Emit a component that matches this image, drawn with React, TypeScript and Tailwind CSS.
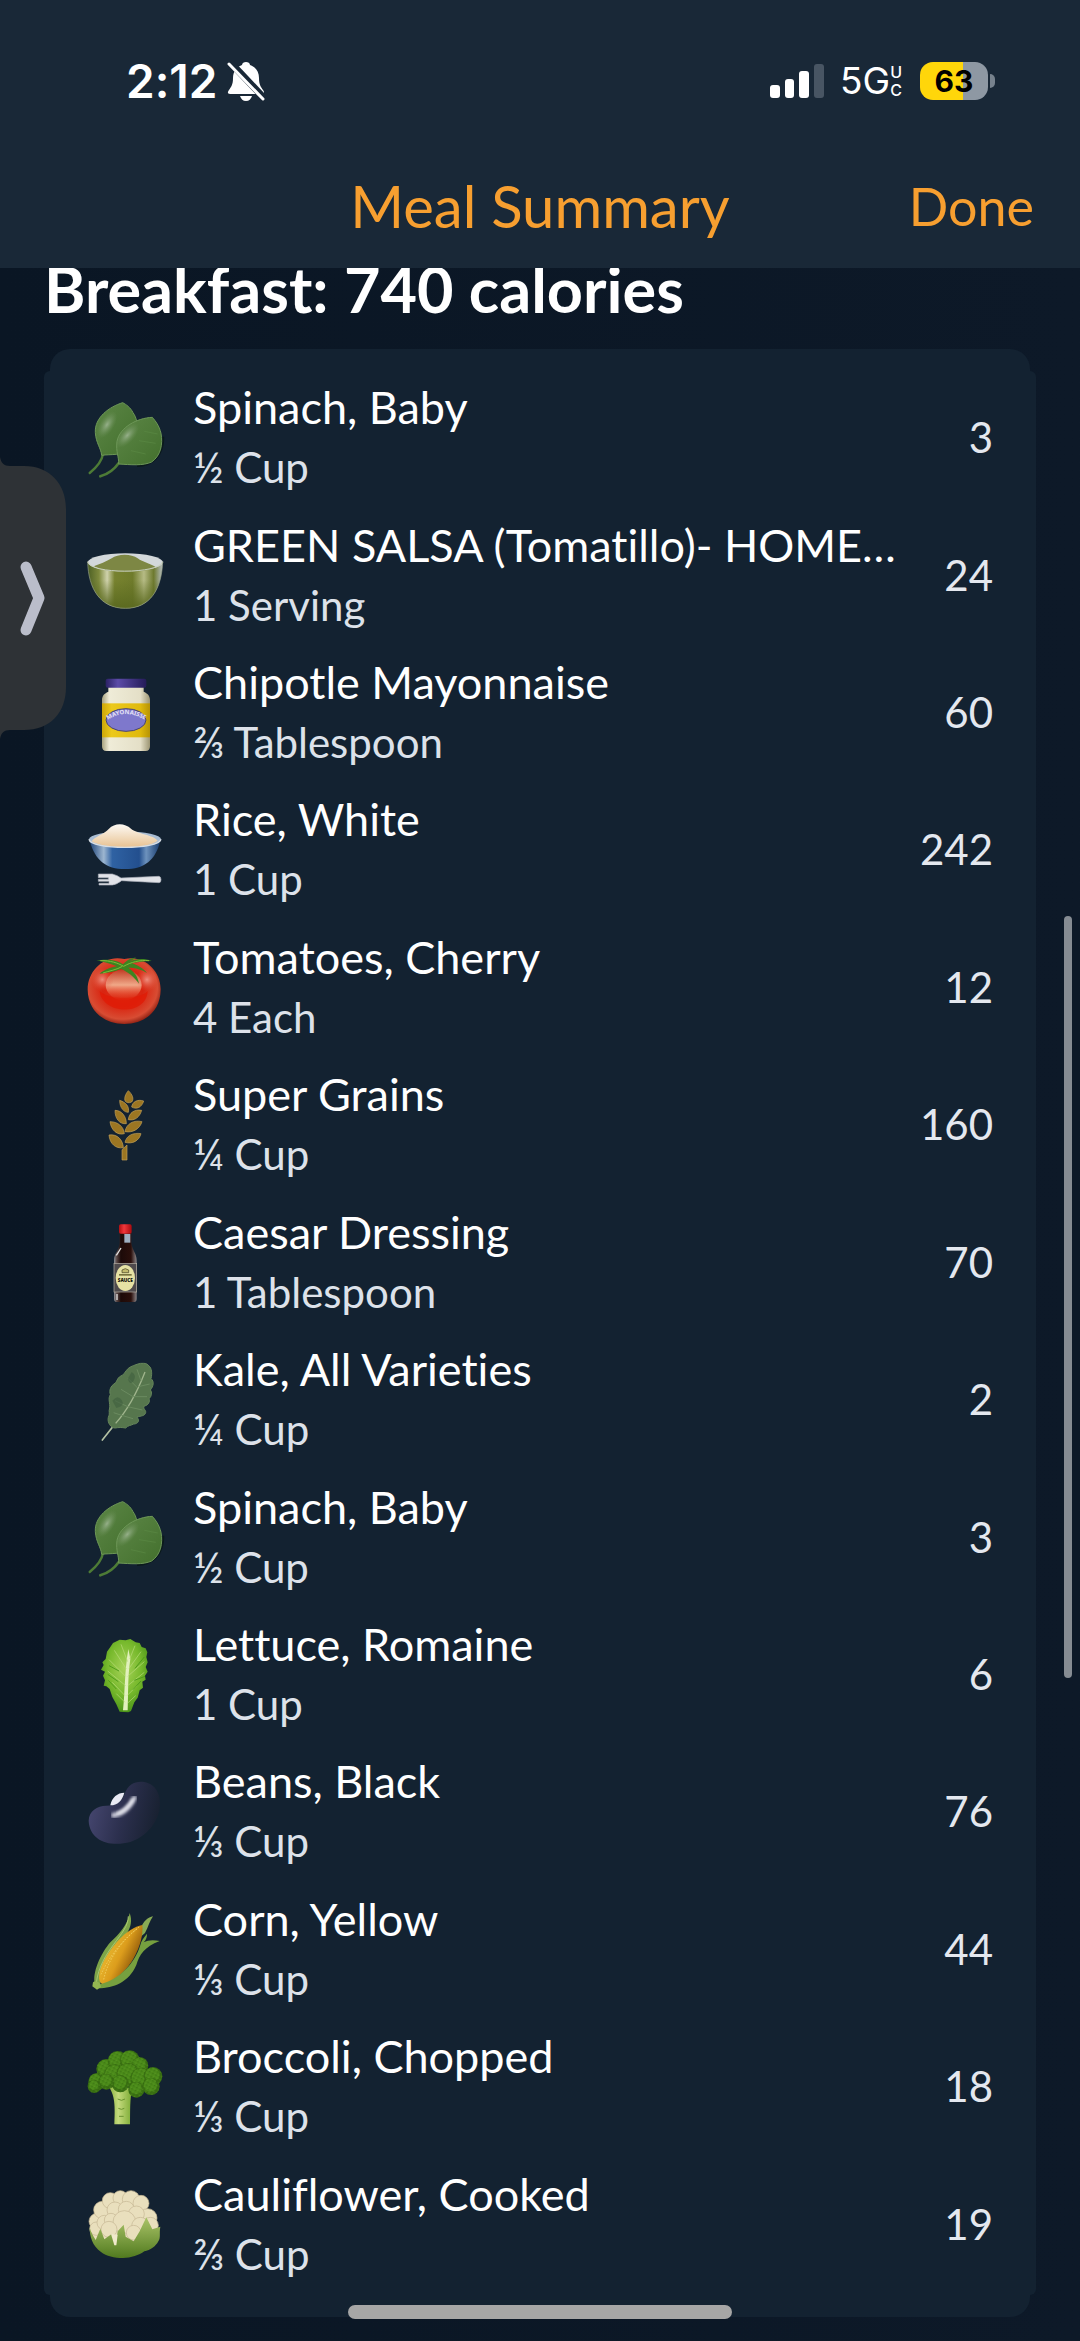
import type { ReactNode } from "react"

const Spinach = () => (
  <>
    <defs>
      <linearGradient id="leaf" x1="0" y1="0" x2="1" y2="1">
        <stop offset="0" stopColor="#5c8646" />
        <stop offset="1" stopColor="#43702d" />
      </linearGradient>
      <radialGradient id="leafShine">
        <stop offset="0" stopColor="#9db592" stopOpacity="0.9" />
        <stop offset="1" stopColor="#6f935c" stopOpacity="0" />
      </radialGradient>
    </defs>
    <path d="M48 156C44 182 24 200 8 213" fill="none" stroke="#4d7b36" strokeWidth="7" strokeLinecap="round" />
    <path d="M107 2C68 14 22 46 25 92C27 124 42 138 44 160C70 156 110 162 130 140C158 108 156 56 138 32C130 16 118 8 107 2Z" fill="url(#leaf)" stroke="#6d9757" strokeWidth="3" />
    <ellipse cx="60" cy="68" rx="22" ry="46" fill="url(#leafShine)" transform="rotate(32 60 68)" />
    <path d="M229 104C230 160 196 192 150 192" fill="none" stroke="#0b1a1c" strokeWidth="6" />
    <path d="M96 182C82 202 60 217 40 223" fill="none" stroke="#4d7b36" strokeWidth="8" strokeLinecap="round" />
    <path d="M196 46C150 48 98 76 90 118C86 150 96 164 95 186C130 188 168 192 194 180C222 160 228 126 222 94C216 70 206 58 196 46Z" fill="url(#leaf)" stroke="#6d9757" strokeWidth="3" />
    <path d="M132 146L176 156M156 116L206 124M172 88L212 96" fill="none" stroke="#5b8944" strokeWidth="2" />
    <ellipse cx="121" cy="100" rx="22" ry="46" fill="url(#leafShine)" transform="rotate(42 121 100)" />
  </>
)

const Salsa = () => (
  <>
    <defs>
      <linearGradient id="salsaBowl">
        <stop offset="0" stopColor="#4c5f24" />
        <stop offset="0.15" stopColor="#7e8a3d" />
        <stop offset="0.26" stopColor="#cfd2ac" />
        <stop offset="0.36" stopColor="#77822f" />
        <stop offset="0.6" stopColor="#6f7b2b" />
        <stop offset="0.75" stopColor="#b6bb85" />
        <stop offset="0.88" stopColor="#6d792e" />
        <stop offset="1" stopColor="#b9c0c4" />
      </linearGradient>
      <linearGradient id="salsaShade" x1="0" y1="0" x2="0" y2="1">
        <stop offset="0.4" stopColor="#5b6a20" stopOpacity="0" />
        <stop offset="1" stopColor="#5b6a20" />
      </linearGradient>
    </defs>
    <path d="M2 68C4 150 40 208 115 208C190 208 224 150 227 68Z" fill="url(#salsaBowl)" />
    <path d="M2 68C4 150 40 208 115 208C190 208 224 150 227 68Z" fill="url(#salsaShade)" />
    <ellipse cx="115" cy="70" rx="113" ry="27" fill="#d3d8da" />
    <path d="M20 82C38 76 58 68 74 58C92 44 134 44 152 58C168 70 190 74 206 84C170 104 60 104 20 82Z" fill="#7d8744" />
    <path d="M2 68C8 106 218 106 227 68" fill="none" stroke="#c9d1bd" strokeWidth="3" />
    <path d="M2 68C4 150 40 208 115 208C190 208 224 150 227 68" fill="none" stroke="#9aa48b" strokeWidth="2" />
  </>
)

const Mayonnaise = () => (
  <>
    <defs>
      <linearGradient id="jar">
        <stop offset="0" stopColor="#a7a27f" />
        <stop offset="0.15" stopColor="#efecd8" />
        <stop offset="0.8" stopColor="#e4dfc7" />
        <stop offset="1" stopColor="#9c9573" />
      </linearGradient>
      <linearGradient id="jarLabel">
        <stop offset="0" stopColor="#cda708" />
        <stop offset="0.2" stopColor="#ecc91c" />
        <stop offset="0.8" stopColor="#dfb90d" />
        <stop offset="1" stopColor="#b79304" />
      </linearGradient>
      <linearGradient id="lid">
        <stop offset="0" stopColor="#2b2164" />
        <stop offset="0.3" stopColor="#5c4ba8" />
        <stop offset="1" stopColor="#241b58" />
      </linearGradient>
      <path id="labelArc" d="M60 130Q116 92 176 130" />
    </defs>
    <path d="M64 28H170V44C184 50 189 58 189 70V208Q189 222 176 222H58Q45 222 45 208V70C45 58 50 50 64 44Z" fill="url(#jar)" />
    <rect x="56" y="5" width="122" height="27" rx="6" fill="url(#lid)" />
    <rect x="45" y="79" width="144" height="102" fill="url(#jarLabel)" />
    <ellipse cx="117" cy="129" rx="60" ry="34" fill="#7e78cc" stroke="#4a4470" strokeWidth="3" />
    <text fill="#e6e3f6" textAnchor="middle" className="font-sans text-[18px] font-bold">
      <textPath href="#labelArc" startOffset="50%">MAYONAISSE</textPath>
    </text>
  </>
)

const Rice = () => (
  <>
    <defs>
      <linearGradient id="blueBowl">
        <stop offset="0" stopColor="#1d4378" />
        <stop offset="0.2" stopColor="#9db6d0" />
        <stop offset="0.32" stopColor="#2f62a3" />
        <stop offset="0.7" stopColor="#234f8e" />
        <stop offset="0.8" stopColor="#6d92bd" />
        <stop offset="1" stopColor="#173b6d" />
      </linearGradient>
      <linearGradient id="grain" x1="0" y1="0" x2="0" y2="1">
        <stop offset="0" stopColor="#fdfaf4" />
        <stop offset="1" stopColor="#e8c292" />
      </linearGradient>
    </defs>
    <path d="M8 80C24 138 56 165 114 165C172 165 206 138 220 80Z" fill="url(#blueBowl)" />
    <ellipse cx="114" cy="76" rx="108" ry="24" fill="#a9bdd3" />
    <path d="M14 82C24 66 50 62 66 44C82 26 114 26 132 44C150 60 200 62 212 80C180 106 50 106 14 82Z" fill="url(#grain)" />
    <path d="M6 76C10 108 216 108 222 76" fill="none" stroke="#d8dde2" strokeWidth="4" />
    <path d="M34 180H76Q92 184 102 192L216 187Q222 188 222 197T216 206L104 200Q88 212 76 213H36V208H66V202H34V196H64V191H34V186Z" fill="#e1e3e8" stroke="#a6abb5" strokeWidth="2" />
  </>
)

const Tomato = () => (
  <>
    <defs>
      <radialGradient id="tomatoSkin" cx="0.48" cy="0.45" r="0.56">
        <stop offset="0" stopColor="#e0371c" />
        <stop offset="0.5" stopColor="#d92410" />
        <stop offset="0.85" stopColor="#d84c33" />
        <stop offset="1" stopColor="#8f2214" />
      </radialGradient>
      <linearGradient id="tomatoGlow" x1="0" y1="0" x2="0" y2="1">
        <stop offset="0" stopColor="#c23c24" />
        <stop offset="0.5" stopColor="#f0a888" />
        <stop offset="1" stopColor="#e23318" stopOpacity="0.1" />
      </linearGradient>
      <radialGradient id="tomatoSpot">
        <stop offset="0" stopColor="#f0998a" stopOpacity="0.9" />
        <stop offset="1" stopColor="#e0553c" stopOpacity="0" />
      </radialGradient>
    </defs>
    <path d="M112 24C170 10 222 58 221 116C220 182 172 219 112 219C52 219 3 180 2 116C2 56 54 10 112 24Z" fill="url(#tomatoSkin)" />
    <path d="M38 120C44 190 178 198 182 120C160 146 64 148 38 120Z" fill="#e01c06" opacity="0.8" />
    <ellipse cx="110" cy="102" rx="54" ry="46" fill="url(#tomatoGlow)" />
    <circle cx="46" cy="86" r="34" fill="url(#tomatoSpot)" />
    <circle cx="180" cy="86" r="34" fill="url(#tomatoSpot)" />
    <path d="M108 40C82 22 50 26 28 28C56 34 74 40 90 46C66 50 50 58 38 68C64 66 84 62 102 54C122 62 140 76 156 98C152 76 142 62 124 50C144 50 166 56 180 66C170 52 150 42 134 36C152 34 174 30 194 30C170 20 144 24 126 32L148 20C132 20 118 28 108 40Z" fill="#3d8420" />
    <path d="M40 29C70 28 92 36 110 46C130 34 160 26 186 29M106 46C90 56 66 60 48 66" fill="none" stroke="#7fbb3a" strokeWidth="3" />
  </>
)

const Grain = () => (
  <g fill="#9c7622" stroke="#c2a259" strokeWidth="2">
    <path d="M124 5C136 16 142 30 134 39C126 43 118 41 115 37C110 28 116 14 124 5Z" />
    <path d="M98 34C116 40 128 52 124 70C112 70 98 58 98 34Z" />
    <path d="M170 36C152 30 136 38 134 54C148 62 164 56 170 36Z" />
    <path d="M84 64C104 64 118 82 118 104C98 106 84 90 84 64Z" />
    <path d="M164 64C142 60 126 72 124 92C144 96 158 84 164 64Z" />
    <path d="M69 98C92 98 110 112 112 134C92 140 72 124 69 98Z" />
    <path d="M165 98C140 92 118 104 114 128C138 132 158 120 165 98Z" />
    <path d="M66 138C92 134 108 154 109 176C86 180 68 164 66 138Z" />
    <path d="M162 134C138 130 118 140 114 160C136 166 156 156 162 134Z" />
    <path d="M105 182L120 168V213H105Z" />
  </g>
)

const Bottle = () => (
  <>
    <defs>
      <linearGradient id="sauce">
        <stop offset="0" stopColor="#8e9298" />
        <stop offset="0.12" stopColor="#5a4846" />
        <stop offset="0.3" stopColor="#1c0a08" />
        <stop offset="0.75" stopColor="#2a0f0b" />
        <stop offset="1" stopColor="#8b8587" />
      </linearGradient>
      <linearGradient id="cap">
        <stop offset="0" stopColor="#b30f12" />
        <stop offset="0.4" stopColor="#f1383c" />
        <stop offset="1" stopColor="#a90b0f" />
      </linearGradient>
    </defs>
    <path d="M98 20H133V52C136 74 149 82 149 104V218Q149 228 140 228H90Q81 228 81 218V104C81 82 96 74 98 52Z" fill="url(#sauce)" />
    <path d="M112 24H130V50H112Z" fill="#9fb0c2" />
    <path d="M88 88Q96 76 102 66" stroke="#e3e3e3" strokeWidth="4" fill="none" />
    <rect x="96" y="-5" width="38" height="28" rx="5" fill="url(#cap)" />
    <rect x="81" y="112" width="68" height="86" fill="#4f4a4c" stroke="#b8b2a4" strokeWidth="2" />
    <ellipse cx="115" cy="156" rx="29" ry="39" fill="#e6e2a4" />
    <path d="M105 140V132Q115 124 125 132V140Z" fill="#c2ba6e" stroke="#443f23" strokeWidth="2" />
    <rect x="96" y="144" width="38" height="5" fill="#78733f" />
    <text x="115" y="168" textAnchor="middle" fill="#14120c" className="font-sans text-[14px] font-black">SAUCE</text>
    <path d="M90 204V222" stroke="#c5c1c1" strokeWidth="5" />
  </>
)

const Kale = () => (
  <>
    <path d="M46 228L98 162" stroke="#b3c1a4" strokeWidth="5" strokeLinecap="round" />
    <path
      d="M170 -2C158 -4 142 4 132 8C118 14 116 26 106 34C90 40 92 50 84 58C70 66 66 80 70 92C62 104 70 118 68 132C64 142 70 150 64 160C60 176 72 192 84 192C96 190 104 190 116 192C122 184 134 184 140 180C152 180 160 170 150 160C162 154 172 158 176 146C178 138 166 134 172 126C184 124 190 112 186 104C194 98 196 84 190 78C200 66 202 52 192 44C196 28 194 12 186 6C182 0 176 -2 170 -2Z"
      fill="#56764d"
      stroke="#66865b"
      strokeWidth="3"
    />
    <path d="M86 178C120 140 150 86 174 24" fill="none" stroke="#a0b58d" strokeWidth="4" />
    <path d="M104 154L80 146M122 128L84 110M138 98L102 76M152 72L122 42M162 50L150 16M104 154L138 164M122 128L166 138M138 98L180 98M154 68L188 60" fill="none" stroke="#6b8b60" strokeWidth="3" />
    <path d="M76 110Q92 90 104 108T88 132ZM134 24Q150 34 140 50T122 44Z" fill="#3f5f3f" opacity="0.6" />
  </>
)

const Lettuce = () => (
  <>
    <defs>
      <radialGradient id="romaine" cx="0.5" cy="0.4" r="0.6">
        <stop offset="0" stopColor="#a8d35a" />
        <stop offset="0.6" stopColor="#77b92c" />
        <stop offset="1" stopColor="#4c9519" />
      </radialGradient>
    </defs>
    <path
      d="M98 2L116 4L130 0L146 10L158 12L164 24L176 28L181 40L178 54L182 70L176 84L182 98L174 110L176 122L166 128L168 146L158 154L152 176L142 190L132 216L124 220L98 218L88 196L76 174L68 150L58 142L50 140L54 124L48 110L54 98L42 92L50 78L46 70L56 60L60 38L70 24L78 12Z"
      fill="url(#romaine)"
    />
    <path d="M108 214C114 160 112 100 124 30L130 60C122 110 124 170 122 214Z" fill="#e2f0bd" />
    <path d="M114 170L76 130M116 140L62 96M116 112L66 62M118 90L82 34M122 68L102 16M120 170L150 140M122 140L172 100M122 112L172 68M126 88L162 38M128 60L144 20M114 190L88 164M122 192L146 170" fill="none" stroke="#b9dc7c" strokeWidth="2" />
    <path d="M88 150L64 124M94 128L62 106M96 96L66 80M138 152L162 126M142 124L174 112M144 88L172 54" fill="none" stroke="#4f9b1b" strokeWidth="3" />
  </>
)

const Bean = () => (
  <>
    <defs>
      <linearGradient id="beanSkin" x1="0" y1="0.4" x2="1" y2="0.6">
        <stop offset="0" stopColor="#45466f" />
        <stop offset="0.5" stopColor="#2b2f4d" />
        <stop offset="1" stopColor="#17202f" />
      </linearGradient>
      <filter id="beanBlur">
        <feGaussianBlur stdDeviation="5" />
      </filter>
    </defs>
    <path d="M5 134C6 104 30 90 58 89C88 88 104 78 112 56C124 22 146 15 172 18C206 24 224 56 218 98C212 138 180 180 130 198C70 214 8 196 5 134Z" fill="url(#beanSkin)" />
    <path d="M70 88C74 64 92 50 112 50C106 74 92 88 70 88Z" fill="#e9eaf4" />
    <path d="M80 118C108 114 128 94 142 66" fill="none" stroke="#c6c7d6" strokeWidth="15" strokeLinecap="round" filter="url(#beanBlur)" />
    <path d="M92 112C112 104 126 90 137 72" fill="none" stroke="#f5f5fa" strokeWidth="6" strokeLinecap="round" filter="url(#beanBlur)" />
  </>
)

const Corn = () => (
  <>
    <defs>
      <linearGradient id="cob" x1="0.2" y1="0.3" x2="0.8" y2="0.7">
        <stop offset="0" stopColor="#e9b931" />
        <stop offset="0.5" stopColor="#dc9d1c" />
        <stop offset="1" stopColor="#8d5609" />
      </linearGradient>
    </defs>
    <path d="M128 0C136 22 132 42 120 60C92 96 50 140 40 212L24 214C14 180 42 120 70 88C98 62 122 34 128 0Z" fill="#7da548" />
    <path d="M198 10C184 12 168 24 160 50L156 76L174 60C184 42 188 24 198 10Z" fill="#88ab55" />
    <path d="M166 36C172 90 130 186 52 214C32 214 34 186 42 162C66 104 120 44 166 36Z" fill="url(#cob)" />
    <path d="M150 48C108 80 62 138 50 200M156 42C112 76 70 124 42 184" fill="none" stroke="#f0c955" strokeWidth="3" strokeDasharray="5 4" />
    <path d="M180 62C170 74 162 84 160 96C144 150 98 198 44 212C30 212 30 218 34 226C80 224 124 210 148 156C158 124 172 102 218 84C196 80 182 82 170 88C178 80 180 72 180 62Z" fill="#76a03f" />
    <path d="M124 10C124 66 40 110 28 210" fill="none" stroke="#a9c873" strokeWidth="3" />
    <path d="M18 208Q26 200 38 210L42 222L30 230L16 220Z" fill="#93b651" />
  </>
)

const florets = [
  [30, 92, 26], [22, 106, 20], [58, 54, 30], [92, 30, 30], [128, 28, 30], [158, 44, 26],
  [84, 74, 34], [124, 72, 36], [164, 84, 34], [198, 76, 28], [192, 106, 26], [148, 116, 24],
  [100, 98, 26], [58, 92, 24],
]

const Broccoli = () => (
  <>
    <defs>
      <pattern id="buds" width="11" height="10" patternUnits="userSpaceOnUse" patternTransform="rotate(28)">
        <circle cx="3" cy="3" r="2" fill="#63a029" />
        <circle cx="8" cy="7" r="2" fill="#2b5d0a" />
      </pattern>
      <linearGradient id="stalk">
        <stop offset="0" stopColor="#86b03d" />
        <stop offset="0.4" stopColor="#c4da7c" />
        <stop offset="1" stopColor="#79a932" />
      </linearGradient>
    </defs>
    <path d="M66 108C80 130 86 150 82 220H129C130 176 128 146 136 110Z" fill="url(#stalk)" />
    <path d="M92 144Q104 152 114 144M94 172Q104 178 112 172M96 196H110" stroke="#6a9330" strokeWidth="3" fill="none" />
    {florets.map(([cx, cy, r], i) => (
      <g key={i}>
        <circle cx={cx} cy={cy} r={r} fill="#396f12" />
        <circle cx={cx - 2} cy={cy - 4} r={r - 6} fill="#4a8a19" />
        <circle cx={cx} cy={cy} r={r} fill="url(#buds)" opacity="0.6" />
      </g>
    ))}
  </>
)

const curds = [
  [30, 100, 24], [28, 122, 20], [46, 66, 26], [70, 38, 24], [100, 30, 22], [132, 34, 26],
  [162, 46, 24], [182, 90, 28], [190, 112, 24], [52, 104, 22], [84, 66, 24], [118, 64, 24],
  [148, 78, 24], [72, 96, 20], [112, 102, 34], [160, 114, 26], [66, 124, 24], [140, 134, 22],
]

const Cauliflower = () => (
  <>
    <defs>
      <linearGradient id="caulLeaf" x1="0" y1="0" x2="0" y2="1">
        <stop offset="0" stopColor="#aac468" />
        <stop offset="1" stopColor="#517a1f" />
      </linearGradient>
    </defs>
    <path d="M10 110C12 166 50 190 110 192C170 192 206 160 210 100Z" fill="#e9dfbd" />
    {curds.map(([cx, cy, r], i) => (
      <circle key={i} cx={cx} cy={cy} r={r} fill="#e9dfbd" stroke="#c4b593" strokeWidth="2" />
    ))}
    <path d="M8 118C10 130 18 144 26 156L40 122L52 154L74 138L86 172L92 130L110 110L116 146L140 160L158 130L178 88L196 124L220 116C216 136 222 148 214 160C206 176 190 186 172 190C156 202 132 210 108 210C82 210 58 204 42 192C16 174 8 146 8 118Z" fill="url(#caulLeaf)" />
    <path d="M72 138L82 172L88 172L92 140Z" fill="#f0e9cb" />
  </>
)

type Food = { name: string; amount: string; calories: number; icon: ReactNode }

const foods: Food[] = [
  { name: "Spinach, Baby", amount: "½ Cup", calories: 3, icon: <Spinach /> },
  { name: "GREEN SALSA (Tomatillo)- HOME…", amount: "1 Serving", calories: 24, icon: <Salsa /> },
  { name: "Chipotle Mayonnaise", amount: "⅔ Tablespoon", calories: 60, icon: <Mayonnaise /> },
  { name: "Rice, White", amount: "1 Cup", calories: 242, icon: <Rice /> },
  { name: "Tomatoes, Cherry", amount: "4 Each", calories: 12, icon: <Tomato /> },
  { name: "Super Grains", amount: "¼ Cup", calories: 160, icon: <Grain /> },
  { name: "Caesar Dressing", amount: "1 Tablespoon", calories: 70, icon: <Bottle /> },
  { name: "Kale, All Varieties", amount: "¼ Cup", calories: 2, icon: <Kale /> },
  { name: "Spinach, Baby", amount: "½ Cup", calories: 3, icon: <Spinach /> },
  { name: "Lettuce, Romaine", amount: "1 Cup", calories: 6, icon: <Lettuce /> },
  { name: "Beans, Black", amount: "⅓ Cup", calories: 76, icon: <Bean /> },
  { name: "Corn, Yellow", amount: "⅓ Cup", calories: 44, icon: <Corn /> },
  { name: "Broccoli, Chopped", amount: "⅓ Cup", calories: 18, icon: <Broccoli /> },
  { name: "Cauliflower, Cooked", amount: "⅔ Cup", calories: 19, icon: <Cauliflower /> },
]

function FoodRow({ name, amount, calories, icon }: Food) {
  return (
    <li className="flex min-h-[120px] flex-1 items-center px-[43px]">
      <svg viewBox="0 0 228 228" className="size-[76px] shrink-0 overflow-visible" aria-hidden="true">{icon}</svg>
      <div className="ml-[30px] min-w-0 flex-1 pb-[5px]">
        <p className="truncate text-[45px] leading-[60px] text-white">{name}</p>
        <p className="truncate text-[42px] leading-[60px] text-[#dde2ea]">{amount}</p>
      </div>
      <span className="ml-4 pb-[5px] text-[42px] leading-[60px] text-[#e4e8ef]">{calories}</span>
    </li>
  )
}

function StatusBar() {
  return (
    <div className="flex h-[162px] items-center justify-between pr-[85px] pl-[126px] font-['Inter',sans-serif] text-white">
      <div className="flex items-center gap-[10px]">
        <span className="text-[46px] leading-[48px] font-semibold">2:12</span>
        <svg viewBox="0 0 38 40" className="h-[40px] w-[38px]" aria-hidden="true">
          <path d="M19 1C21 1 23 2 23 4C29 6 32 11 32 17C32 24 34 26 36 29C38 32 37 33 35 33H3C1 33 0 32 2 29C4 26 6 24 6 17C6 11 9 6 15 4C15 2 17 1 19 1Z" fill="#fff" />
          <path d="M13 35H25C24 38 22 40 19 40S14 38 13 35Z" fill="#fff" />
          <path d="M3 1L38 38" stroke="#192837" strokeWidth="7" />
          <path d="M2 3L36 38" stroke="#fff" strokeWidth="3" strokeLinecap="round" />
        </svg>
      </div>
      <div className="flex items-center">
        <svg viewBox="0 0 54 34" className="h-[34px] w-[54px]" aria-hidden="true">
          <rect x="0" y="21" width="10" height="13" rx="3" fill="#fff" />
          <rect x="15" y="15" width="9" height="19" rx="3" fill="#fff" />
          <rect x="29" y="7" width="10" height="27" rx="3" fill="#fff" />
          <rect x="44" y="0" width="10" height="34" rx="3" fill="#485563" />
        </svg>
        <span className="ml-[16px] text-[37px] leading-[40px]">5G</span>
        <span className="flex flex-col text-[16px] leading-[18px] font-medium">
          <span>U</span>
          <span>C</span>
        </span>
        <div className="ml-[18px] flex h-[38px] w-[68px] items-center justify-center rounded-[13px] bg-linear-to-r from-[#ffd60a] from-63% to-[#8e98a3] to-63% text-[30px] font-bold text-black">
          63
        </div>
        <div className="ml-[2px] h-[14px] w-[5px] rounded-r-full bg-[#77828d]"></div>
      </div>
    </div>
  )
}

function App() {
  return (
    <div className="relative flex min-h-screen flex-col bg-linear-to-r from-[#0a1624] to-[#0d1928] font-['Lato',sans-serif] [font-variant-ligatures:none]">
      <header className="relative z-10 h-[268px] bg-[#192837]">
        <StatusBar />
        <div className="grid h-[88px] grid-cols-[1fr_auto_1fr] items-center px-[46px] text-[#f79f30]">
          <span></span>
          <h1 className="text-[58px] leading-[72px]">Meal Summary</h1>
          <button type="button" className="justify-self-end text-[52px] leading-[72px]">Done</button>
        </div>
      </header>

      <main className="flex flex-1 flex-col px-[44px] pb-[24px]">
        <h2 className="-mt-[15px] h-[96px] text-[63px] leading-[72px] font-bold text-white">Breakfast: 740 calories</h2>
        <div className="mx-[6px] h-[22px] rounded-t-[20px] bg-[#132231]"></div>
        <ul className="flex flex-1 flex-col rounded-[6px] bg-[#132231]">
          {foods.map((food, i) => (
            <FoodRow key={i} {...food} />
          ))}
        </ul>
        <div className="mx-[6px] h-[22px] rounded-b-[20px] bg-[#132231]"></div>
      </main>

      {/* drawer handle */}
      <button type="button" aria-label="Open drawer" className="absolute top-[457px] left-0">
        <svg viewBox="0 0 66 282" className="h-[282px] w-[66px]">
          <path d="M0 0C1 6 4 9 10 9H24C50 9 66 27 66 52V230C66 256 50 273 24 273H10C4 273 1 276 0 282Z" fill="#2e3236" />
          <path d="M26 110L39 141L26 173" fill="none" stroke="#babdca" strokeWidth="11" strokeLinecap="round" strokeLinejoin="round" />
        </svg>
      </button>

      <div className="absolute top-[916px] right-[8px] h-[762px] w-[8px] rounded-full bg-[#868c93]"></div>
      <div className="absolute bottom-[22px] left-1/2 h-[14px] w-[384px] -translate-x-1/2 rounded-full bg-[#a6a6a6]"></div>
    </div>
  )
}

export default App
